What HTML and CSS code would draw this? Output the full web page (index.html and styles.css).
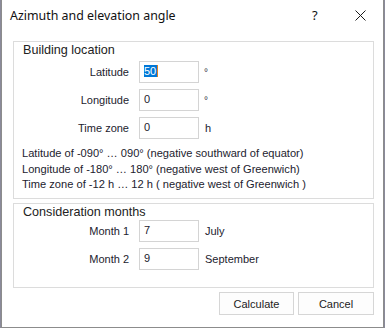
FILE: index.html
```html
<!DOCTYPE html>
<html>
<head>
<meta charset="utf-8">
<link rel="stylesheet" href="styles.css">
</head>
<body>
<div class="window">
  <div class="titlebar">
    <span class="title">Azimuth and elevation angle</span>
    <span class="help">?</span>
    <span class="close">
      <svg width="11" height="11" viewBox="0 0 11 11"><path d="M0.5 0.5 L10.5 10.5 M10.5 0.5 L0.5 10.5" stroke="#1a1a1a" stroke-width="1" fill="none"/></svg>
    </span>
  </div>
  <div class="content">
    <div class="group group-location">
      <div class="legend">Building location</div>
      <div class="rows">
        <span class="label">Latitude</span>
        <span class="input"><span class="sel">50</span></span>
        <span class="unit deg">°</span>
        <span class="label">Longitude</span>
        <span class="input">0</span>
        <span class="unit deg">°</span>
        <span class="label">Time zone</span>
        <span class="input">0</span>
        <span class="unit">h</span>
      </div>
      <div class="info">
        <div>Latitude of -090° … 090° (negative southward of equator)</div>
        <div>Longitude of -180° … 180° (negative west of Greenwich)</div>
        <div>Time zone of -12 h … 12 h ( negative west of Greenwich )</div>
      </div>
    </div>
    <div class="group group-months">
      <div class="legend">Consideration months</div>
      <div class="rows">
        <span class="label">Month 1</span>
        <span class="input">7</span>
        <span class="unit">July</span>
        <span class="label">Month 2</span>
        <span class="input">9</span>
        <span class="unit">September</span>
      </div>
    </div>
    <div class="buttons">
      <button class="btn btn-calc">Calculate</button>
      <button class="btn btn-cancel">Cancel</button>
    </div>
  </div>
</div>
</body>
</html>
```
FILE: styles.css
```css
html, body {
  margin: 0;
  padding: 0;
  background: #8a8a9a;
}
body {
  width: 385px;
  height: 328px;
  overflow: hidden;
}
.window {
  margin-left: 1px;
  width: 381px;
  height: 327px;
  background: #ffffff;
  border-left: 1px solid #8c8c8c;
  border-right: 1px solid #8c8c8c;
  border-bottom: 1px solid #8c8c8c;
  font-family: "Liberation Sans", Arial, sans-serif;
  font-size: 11px;
  color: #22222e;
  display: flex;
  flex-direction: column;
}
.titlebar {
  height: 30px;
  display: flex;
  align-items: center;
  font-family: "Noto Sans", sans-serif;
  font-size: 12.4px;
  color: #111;
}
.title {
  padding-left: 8px;
  flex: 1;
}
.help {
  width: 12px;
  margin-right: 31px;
  font-size: 13px;
}
.close {
  width: 11px;
  height: 11px;
  margin-right: 17px;
  display: flex;
}
.content {
  padding: 11px 9px 0 11px;
  display: flex;
  flex-direction: column;
}
.group {
  border: 1px solid #dcdcdc;
}
.group-location {
  height: 156px;
}
.group-months {
  margin-top: 4px;
  height: 83px;
}
.legend {
  font-size: 12.6px;
  line-height: 16px;
  padding-left: 9px;
  color: #222;
}
.rows {
  display: grid;
  grid-template-columns: 115px 60px auto;
  column-gap: 10px;
  row-gap: 6px;
  align-items: center;
}
.group-location .rows {
  margin-top: 3px;
}
.group-months .rows {
  margin-top: 0;
}
.label {
  text-align: right;
}
.input {
  box-sizing: border-box;
  height: 22px;
  border: 1px solid #d4d4d4;
  padding: 2px 0 0 4px;
  line-height: 14px;
  align-self: start;
}
.sel {
  background: #0078d7;
  color: #fff;
  padding-right: 1px;
  border-right: 1px solid #e08020;
}
.unit {
  margin-left: -4px;
}
.deg {
  font-size: 10px;
  color: #334;
  margin-left: -5px;
}
.info {
  margin-top: 7px;
  padding-left: 8px;
  line-height: 15.5px;
  font-size: 11.1px;
}
.buttons {
  margin-top: 4px;
  display: flex;
  justify-content: flex-end;
  gap: 4px;
}
.btn {
  height: 23px;
  border: 1px solid #d6d6d6;
  background: #fdfdfd;
  font-family: "Liberation Sans", Arial, sans-serif;
  font-size: 11px;
  color: #222;
  padding: 0;
}
.btn-calc {
  width: 75px;
}
.btn-cancel {
  width: 76px;
}
```
